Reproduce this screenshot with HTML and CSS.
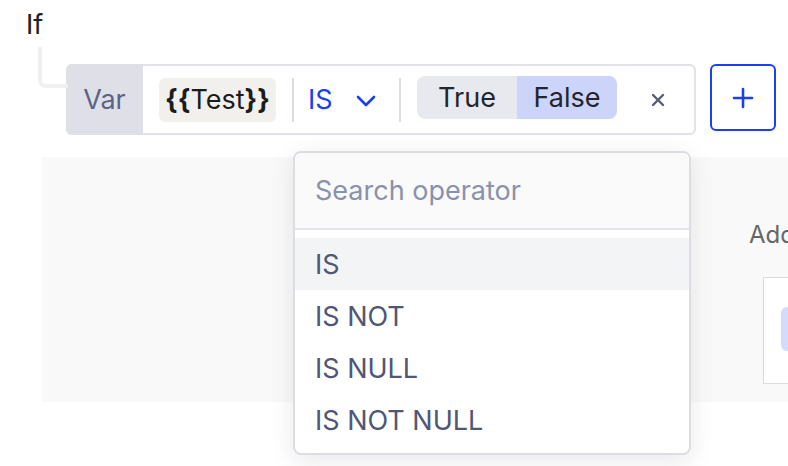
FILE: index.html
```html
<!DOCTYPE html>
<html>
<head>
<meta charset="utf-8">
<link rel="stylesheet" href="styles.css">
</head>
<body>
<div class="page">
  <div class="if-label">If</div>
  <div class="cond-row">
    <div class="cond">
      <div class="var">Var</div>
      <div class="token"><b>{{</b>Test<b>}}</b></div>
      <div class="sep"></div>
      <div class="op">
        <span>IS</span>
        <svg class="chev" width="20" height="12" viewBox="0 0 20 12"><path d="M2 2 L10 10 L18 2" fill="none" stroke="#1a3ff5" stroke-width="2.6" stroke-linecap="round" stroke-linejoin="round"/></svg>
      </div>
      <div class="sep"></div>
      <div class="toggle">
        <span class="seg">True</span>
        <span class="seg on">False</span>
      </div>
      <div class="remove">
        <svg width="14" height="14" viewBox="0 0 14 14"><path d="M2 2 L12 12 M12 2 L2 12" stroke="#555d75" stroke-width="2.4" stroke-linecap="round"/></svg>
      </div>
    </div>
    <button class="add">
      <svg width="22" height="22" viewBox="0 0 22 22"><path d="M11 2 V20 M2 11 H20" stroke="#1a3ff5" stroke-width="2.6" stroke-linecap="round"/></svg>
    </button>
  </div>
  <div class="panel">
    <div class="panel-side">
      <div class="add-text">Add</div>
      <div class="mini-box"><div class="mini-pill"></div></div>
    </div>
  </div>
  <div class="dropdown">
    <div class="search">Search operator</div>
    <ul class="options">
      <li class="opt active">IS</li>
      <li class="opt">IS NOT</li>
      <li class="opt">IS NULL</li>
      <li class="opt">IS NOT NULL</li>
    </ul>
  </div>
</div>
</body>
</html>
```
FILE: styles.css
```css
* { box-sizing: border-box; }
html, body { margin: 0; padding: 0; background: #fff; }
body {
  width: 788px;
  height: 466px;
  overflow: hidden;
  font-family: Inter, "Noto Sans", sans-serif;
  color: #22242e;
}
.page {
  position: relative;
  display: flex;
  flex-direction: column;
  padding-top: 10px;
}
.if-label {
  margin-left: 26px;
  font-size: 27px;
  line-height: 30px;
  color: #1e2029;
}
.cond-row {
  position: relative;
  display: flex;
  align-items: flex-start;
  gap: 14px;
  margin-left: 66px;
  margin-top: 24px;
}
.cond-row::before {
  content: "";
  position: absolute;
  left: -28px;
  top: -17px;
  width: 26px;
  height: 37px;
  border-left: 4px solid #f0f0f2;
  border-bottom: 4px solid #f0f0f2;
  border-bottom-left-radius: 8px;
}
.cond {
  display: flex;
  align-items: center;
  width: 630px;
  height: 71px;
  border: 2px solid #e2e2e8;
  border-radius: 6px;
  background: #fff;
}
.var {
  align-self: stretch;
  margin: -2px 0 -2px -2px;
  width: 77px;
  background: #dfe0e7;
  border-radius: 6px 0 0 6px;
  display: flex;
  align-items: center;
  justify-content: center;
  font-size: 27px;
  color: #5b6485;
}
.token {
  margin-left: 16px;
  height: 44px;
  width: 117px;
  flex-shrink: 0;
  display: flex;
  align-items: center;
  justify-content: center;
  background: #f1f0ed;
  border-radius: 6px;
  font-size: 27px;
  color: #1c1c1c;
  white-space: nowrap;
}
.token b { font-weight: 700; }
.sep {
  width: 2px;
  height: 44px;
  background: #dcdce3;
  margin-left: 16px;
}
.op {
  display: flex;
  align-items: center;
  margin-left: 14px;
  width: 77px;
  color: #1a3ff5;
  font-size: 27px;
}
.chev { margin-left: 23px; margin-top: 2px; }
.op + .sep { margin-left: 14px; }
.toggle {
  display: flex;
  margin-left: 16px;
  height: 43px;
  margin-top: -5px;
  border-radius: 8px;
  overflow: hidden;
}
.seg {
  width: 100px;
  display: flex;
  align-items: center;
  justify-content: center;
  background: #e8e9ef;
  font-size: 27px;
  color: #22242e;
}
.seg.on { background: #ccd5f9; }
.remove {
  margin-left: 34px;
  display: flex;
  align-items: center;
  height: 14px;
}
.add {
  width: 66px;
  height: 67px;
  border: 2px solid #1a3ff5;
  border-radius: 6px;
  background: #fff;
  display: flex;
  align-items: center;
  justify-content: center;
  padding: 0;
}
.panel {
  margin-left: 42px;
  margin-top: 22px;
  height: 245px;
  width: 746px;
  background: #f9f9f9;
  display: flex;
  justify-content: flex-end;
  overflow: hidden;
}
.panel-side {
  flex-shrink: 0;
  width: 70px;
  padding-top: 64px;
  display: flex;
  flex-direction: column;
  gap: 28px;
  margin-right: -31px;
}
.add-text {
  font-size: 24px;
  line-height: 28px;
  color: #666;
  white-space: nowrap;
}
.mini-box {
  margin-left: 14px;
  height: 107px;
  border: 1px solid #dcdce0;
  background: #fff;
  padding: 29px 0 0 17px;
}
.mini-pill {
  height: 44px;
  background: #d5dbfa;
  border-radius: 6px 0 0 6px;
}
.dropdown {
  position: absolute;
  left: 293px;
  top: 151px;
  width: 398px;
  height: 304px;
  border: 2px solid #dcdce3;
  border-radius: 8px;
  background: #fff;
  box-shadow: 0 6px 24px rgba(30, 30, 60, 0.10);
  overflow: hidden;
}
.search {
  height: 77px;
  background: #fafafa;
  border-bottom: 2px solid #e2e2e8;
  display: flex;
  align-items: center;
  padding-left: 20px;
  font-size: 27px;
  color: #8a91ad;
}
.options {
  list-style: none;
  margin: 0;
  padding: 8px 0;
}
.opt {
  height: 52px;
  display: flex;
  align-items: center;
  padding-left: 20px;
  font-size: 27px;
  color: #4f5777;
}
.opt.active { background: #f3f4f6; }
```
